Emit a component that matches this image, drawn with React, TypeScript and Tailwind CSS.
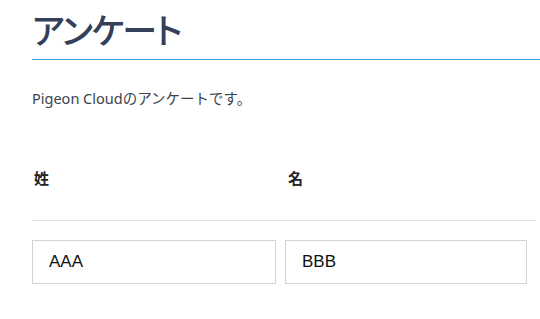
import React from 'react';

const jp = "font-['Noto_Sans','Noto_Sans_CJK_JP',sans-serif]";

export default function App() {
  return (
    <div className={`w-[540px] h-[319px] overflow-hidden bg-white pl-[32px] ${jp}`}>
      {/* タイトル */}
      <h1 className="pt-[6px] pb-[3px] text-[35px] leading-[50px] font-medium tracking-[-1.5px] text-[#34405a] border-b border-b-[color:#3a9bd0] [font-feature-settings:'palt']">
        アンケート
      </h1>
      <p className="mt-[26px] text-[14.5px] leading-[24px] text-[#3c4250]">
        Pigeon Cloudのアンケートです。
      </p>

      {/* フォーム */}
      <div className="mt-[56px] w-[504px]">
        <div className="grid grid-cols-[253px_251px] border-b border-b-[color:#e3e3e3]">
          <div className="pl-[2px] pb-[30px] text-[15px] leading-[24px] font-bold text-[#222]">姓</div>
          <div className="pl-[3px] pb-[30px] text-[15px] leading-[24px] font-bold text-[#222]">名</div>
        </div>
        <div className="grid grid-cols-[253px_251px] pt-[19px]">
          <div>
            <div className="w-[244px] h-[44px] border border-[#d3d3d3] flex items-center pl-[16px] text-[17px] text-[#111] font-['Liberation_Sans',sans-serif]">
              AAA
            </div>
          </div>
          <div>
            <div className="w-[242px] h-[44px] border border-[#d3d3d3] flex items-center pl-[16px] text-[17px] text-[#111] font-['Liberation_Sans',sans-serif]">
              BBB
            </div>
          </div>
        </div>
      </div>
    </div>
  );
}
